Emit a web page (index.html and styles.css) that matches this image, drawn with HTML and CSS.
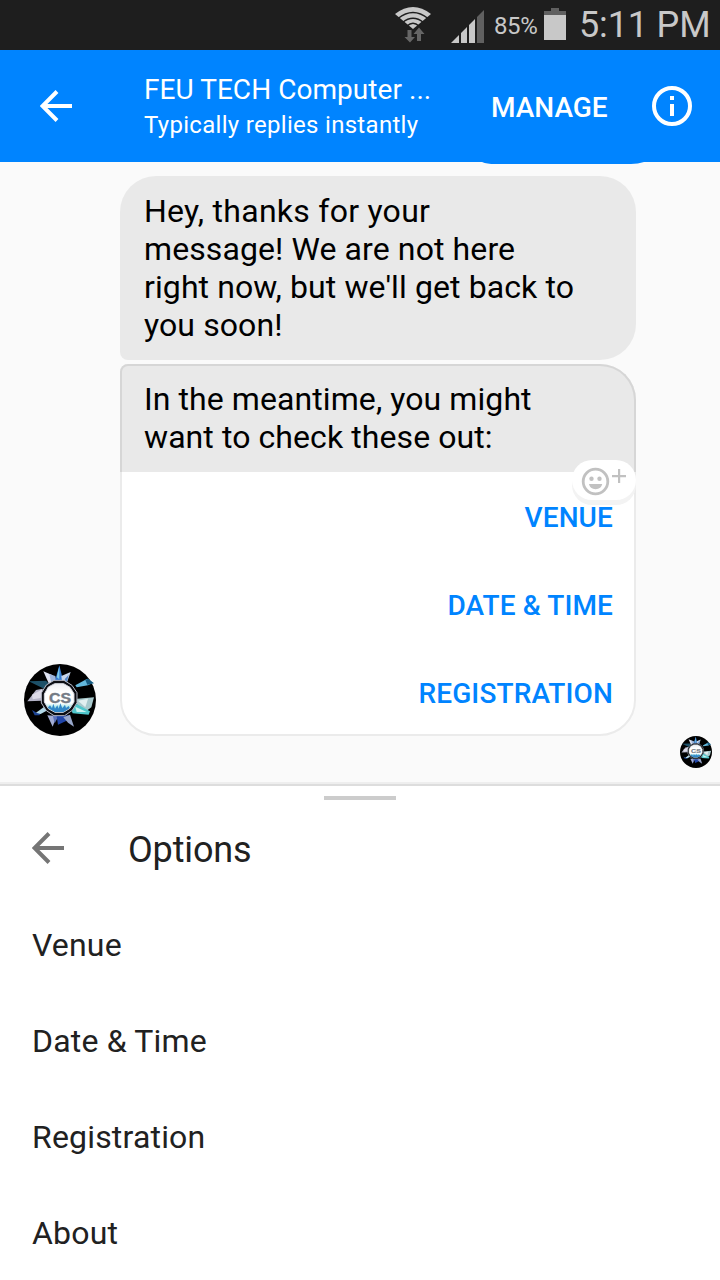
FILE: index.html
```html
<!DOCTYPE html>
<html lang="en">
<head>
<meta charset="utf-8">
<title>Messages</title>
<link rel="stylesheet" href="styles.css">
</head>
<body>
<svg class="defs" width="0" height="0" aria-hidden="true">
  <defs>
    <linearGradient id="badge" x1="0" y1="0" x2="0" y2="1">
      <stop offset="0" stop-color="#eceef3"/><stop offset=".3" stop-color="#fff"/><stop offset=".68" stop-color="#fff"/><stop offset=".85" stop-color="#8fe0e2"/><stop offset="1" stop-color="#3a9fc8"/>
    </linearGradient>
    <symbol id="logo" viewBox="0 0 72 72">
      <circle cx="36" cy="36" r="36" fill="#000"/>
      <g transform="translate(-2 -2) scale(.33333)">
        <path fill="#1d5068" d="M20 58L72 56 84 68 66 80z"/>
        <path fill="#dfe3f2" d="M64 28L92 40 98 58 82 68z"/>
        <path fill="#9cb4dc" d="M82 36L100 42 104 60 88 64z"/>
        <path fill="#3279d0" d="M98 60L112 10 122 50 112 62z"/>
        <path fill="#7ecbea" d="M104 46L112 12 112 52z"/>
        <path fill="#c7d5ea" d="M118 42L146 30 134 64 120 58z"/>
        <path fill="#5386ca" d="M128 52L140 38 134 64z"/>
        <path fill="#63b8dc" d="M160 70L196 50 214 62 198 70 164 76z"/>
        <path fill="#155a80" d="M190 54L198 50 216 64 196 68z"/>
        <path fill="#b5b4c8" d="M16 118L42 84 62 80 60 116z"/>
        <path fill="#dddbe8" d="M30 98L62 82 56 108 32 112z"/>
        <path fill="#a8c9cd" d="M166 110L216 106 208 136 186 152 162 124z"/>
        <path fill="#e2eff0" d="M168 116L198 110 190 136z"/>
        <path fill="#50c7cc" d="M146 140L164 126 204 148 200 158 152 154z"/>
        <path fill="#c9f1f0" d="M160 134L194 150 164 150z"/>
        <path fill="#1c4494" d="M30 144L44 152 68 138 52 160 38 160z"/>
        <path fill="#b2d9e9" d="M42 152L70 132 78 144 56 156z"/>
        <path fill="#a2acd4" d="M76 160L104 162 92 194z"/>
        <path fill="#5d73bc" d="M92 160L110 162 98 184z"/>
        <path fill="#2045a8" d="M104 162L140 160 134 176 108 188z"/>
        <path fill="#98a7cb" d="M124 166L144 158 156 194 138 182z"/>
        <path fill="#0b0d13" stroke="#b9bcc9" stroke-width="3" d="M96 55H126L150 70 165 92V122L151 145 128 161H96L73 146 58 123V93L73 69z"/>
        <path fill="url(#badge)" stroke="#d7dae2" stroke-width="3" d="M98 65H125L144 76 156 95V120L144 139 124 151H99L79 140 67 120V96L79 75z"/>
        <path fill="#3186c7" d="M77 137L84 130 90 139 94 125 99 140 106 130 110 140 115 124 121 139 129 128 132 138 140 132 143 139 124 150H99z"/>
      </g>
      <text x="36" y="39" text-anchor="middle" textLength="22" lengthAdjust="spacingAndGlyphs" class="logo-text">CS</text>
    </symbol>
    <symbol id="back" viewBox="0 0 32 32">
      <path d="M32 16H3M17 1.500L2.500 16L17 30.500" fill="none" stroke="currentColor" stroke-width="4"/>
    </symbol>
  </defs>
</svg>

<div class="status">
  <svg class="wifi" width="36" height="36" viewBox="0 0 36 36">
    <path d="M0 7Q18-7 36 7L18 22z" fill="#c8c8c8"/>
    <path d="M3 11.500Q18-.5 33 11.500M7.500 15.500Q18 7 28.500 15.500M12 19Q18 13.500 24 19" fill="none" stroke="#1e1e1e" stroke-width="1.500"/>
    <path d="M12.500 23h4v7h3.500L15 35.500 9.500 30h3zM22 34v-7h-3.500l5.500-6.500 5.500 6.500H26v7z" fill="#666"/>
  </svg>
  <svg class="signal" width="33" height="33" viewBox="0 0 33 33">
    <path d="M0 33L8 25v8zM10 23l6-6v16h-6zM18 15l6-6v24h-6z" fill="#c8c8c8"/>
    <path d="M26 7l7-7v33h-7z" fill="#606060"/>
  </svg>
  <span class="percent">85%</span>
  <svg class="battery" width="22" height="32" viewBox="0 0 22 32">
    <path d="M7 0h8v3h7v5H0V3h7z" fill="#606060"/><path d="M0 7h22v25H0z" fill="#c8c8c8"/>
  </svg>
  <span class="time">5:11 PM</span>
</div>

<header class="header">
  <svg class="header-back" width="32" height="32"><use href="#back"/></svg>
  <div class="titles">
    <div class="title">FEU TECH Computer ...</div>
    <div class="subtitle">Typically replies instantly</div>
  </div>
  <span class="manage">MANAGE</span>
  <svg class="info" width="40" height="40" viewBox="0 0 40 40">
    <circle cx="20" cy="20" r="18" fill="none" stroke="#fff" stroke-width="4"/>
    <path d="M18 10h4v4h-4zM18 18h4v12h-4z" fill="#fff"/>
  </svg>
  <svg class="tab" width="162" height="2" viewBox="0 0 162 2"><path d="M0 0H162Q156 2 149 2H13Q5 2 0 0z" fill="#0084ff"/></svg>
</header>

<main class="chat">
  <svg class="avatar" width="72" height="72"><use href="#logo"/></svg>
  <div class="messages">
    <div class="bubble"><span class="greeting">Hey, thanks for your</span><br>message! We are not here<br>right now, but we'll get back to<br>you soon!</div>
    <div class="card">
      <div class="card-text">In the meantime, you might<br>want to check these out:</div>
      <div class="action">VENUE</div>
      <div class="action">DATE &amp; TIME</div>
      <div class="action">REGISTRATION</div>
      <div class="react">
        <svg width="64" height="40" viewBox="0 0 64 40">
          <circle cx="23.500" cy="21.500" r="12.300" fill="none" stroke="#c1c1c1" stroke-width="2.800"/>
          <circle cx="19.500" cy="18.700" r="2.200" fill="#c1c1c1"/><circle cx="27.500" cy="18.700" r="2.200" fill="#c1c1c1"/>
          <path d="M17 24h13.200c-.5 3-3 5.200-6.600 5.200S17.500 27 17 24zM40 15h6V9h2.200v6H54v2.200h-5.800V23H46v-5.800h-6z" fill="#c1c1c1"/>
        </svg>
      </div>
    </div>
  </div>
  <svg class="seen" width="32" height="32"><use href="#logo"/></svg>
</main>

<section class="sheet">
  <div class="handle"></div>
  <div class="sheet-head">
    <svg class="sheet-back" width="32" height="32"><use href="#back"/></svg>
    <span class="sheet-title">Options</span>
  </div>
  <div class="option">Venue</div>
  <div class="option">Date &amp; Time</div>
  <div class="option">Registration</div>
  <div class="option">About</div>
</section>
</body>
</html>
```
FILE: styles.css
```css
* { box-sizing: border-box; }
body {
  margin: 0; width: 720px; height: 1280px; overflow: hidden;
  display: flex; flex-direction: column;
  font-family: Roboto, "Liberation Sans", sans-serif; background: #fafafa;
}
svg { display: block; flex: none; }
.defs { position: absolute; }
.logo-text { font: bold 14px "Liberation Sans", sans-serif; fill: #747b85; stroke: #747b85; stroke-width: .4px; }

.status {
  flex: none; height: 50px; background: #1e1e1e; color: #c8c8c8;
  display: flex; justify-content: flex-end; align-items: flex-start; padding-right: 10px;
}
.wifi { margin: 7px 20px 0 0; }
.signal { margin: 10px 10px 0 0; }
.percent { width: 44px; margin-right: 6px; font-size: 24px; line-height: 52px; letter-spacing: -.4px; white-space: nowrap; }
.battery { margin: 8px 13px 0 0; }
.time { width: 131px; font-size: 36px; line-height: 51px; letter-spacing: -.15px; white-space: nowrap; }

.header {
  flex: none; position: relative; height: 112px; background: #0084ff; color: #fff;
  display: flex; align-items: center; padding: 0 28px 0 40px;
}
.titles { width: 347px; margin-left: 72px; padding-top: 2px; white-space: nowrap; }
.title { font-size: 28px; line-height: 36px; letter-spacing: .05px; }
.subtitle { font-size: 24px; line-height: 34px; letter-spacing: .3px; }
.manage { font-size: 28px; font-weight: 500; line-height: 34px; padding-top: 4px; }
.info { margin-left: auto; }
.tab { position: absolute; left: 482px; top: 112px; }

.chat {
  flex: none; height: 622px; display: flex; align-items: flex-end;
  padding: 14px 8px 16px 24px;
}
.avatar { margin-bottom: 32px; }
.messages {
  width: 516px; margin: 0 44px 32px 24px; display: flex; flex-direction: column; gap: 4px;
}
.bubble {
  height: 184px; padding: 16px 24px; background: #e9e9e9; border-radius: 36px 36px 36px 8px;
  font-size: 32px; line-height: 38px; letter-spacing: .1px; white-space: nowrap; color: #000;
}
.greeting { letter-spacing: .26px; }
.card {
  position: relative; height: 372px; background: #fff; border: 2px solid #ebebeb;
  border-radius: 8px 36px 36px 36px;
}
.card-text {
  height: 108px; margin: -2px -2px 0; padding: 14px 22px; background: #e9e9e9;
  border: 2px solid #d6d6d6; border-bottom: 0; border-radius: 8px 36px 0 0;
  font-size: 32px; line-height: 38px; letter-spacing: .08px; white-space: nowrap; color: #000;
}
.action {
  height: 88px; padding: 2px 21px 0; text-align: right; color: #0084ff;
  font-size: 28px; font-weight: 500; line-height: 88px; letter-spacing: .12px;
}
.react {
  position: absolute; right: -2px; top: 94px; width: 64px; height: 40px;
  border-radius: 20px; background: #fff; box-shadow: 0 5px 0 #f3f3f3;
}

.sheet {
  flex: 1; background: #fff; color: #212121;
  border-top: 2px solid #ddd; box-shadow: 0 -2px 0 #eee;
}
.handle { width: 72px; height: 4px; margin: 10px auto 0; background: #ccc; }
.sheet-head { height: 97px; display: flex; align-items: center; padding-left: 32px; color: #757575; }
.sheet-back { margin-bottom: 1px; }
.sheet-title { margin: 3px 0 0 64px; font-size: 36px; line-height: 42px; letter-spacing: -.15px; color: #212121; }
.option { height: 96px; padding-left: 32px; font-size: 32px; line-height: 96px; letter-spacing: .18px; }
```
